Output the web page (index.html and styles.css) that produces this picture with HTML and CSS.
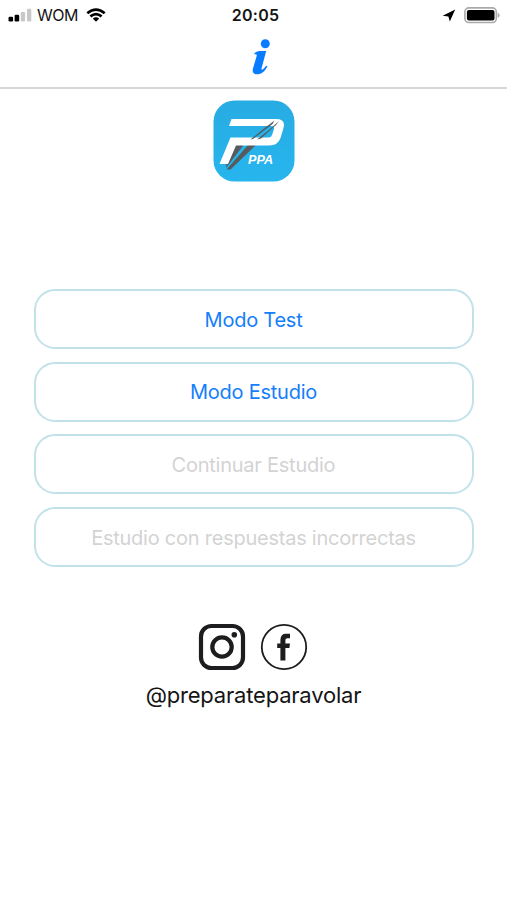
FILE: index.html
```html
<!DOCTYPE html>
<html lang="es">
<head>
<meta charset="utf-8">
<meta name="viewport" content="width=device-width, initial-scale=1">
<title>PPA</title>
<link rel="stylesheet" href="styles.css">
</head>
<body>
<header class="top">
  <div class="status">
    <div class="carrier">
      <svg class="signal" width="24" height="14" viewBox="0 0 24 14">
        <rect x="0.5" y="8.7" width="4.6" height="4.8" rx="1.2"/>
        <rect x="6.6" y="6.8" width="4.6" height="6.7" rx="1.2"/>
        <rect class="dim" x="12.8" y="4" width="4.3" height="9.5" rx="1.2"/>
        <rect class="dim" x="19" y="0.8" width="4.3" height="12.7" rx="1.2"/>
      </svg>
      <span class="name">WOM</span>
      <svg class="wifi" width="20" height="14" viewBox="0 0 20 14">
        <path class="arc" d="M1.3 5.2Q10 -2 18.7 5.2M4.4 8.4Q10 3.8 15.6 8.4"/>
        <path d="M6.8 10.6Q10 8 13.2 10.6L10 13.8Z"/>
      </svg>
    </div>
    <time class="clock">20:05</time>
    <div class="power">
      <svg width="14" height="13" viewBox="0 0 14 13"><path d="M13.2 .4L7.8 12.6L6.4 7.4L.7 6.7Z"/></svg>
      <svg class="battery" width="36" height="17" viewBox="0 0 36 17">
        <rect class="shell" x="0.9" y="0.9" width="31.4" height="14.6" rx="4"/>
        <rect x="2.9" y="3" width="27.6" height="10.5" rx="2"/>
        <path class="cap" d="M33.7 5.7Q35.6 6.2 35.6 8.2T33.7 10.7Z"/>
      </svg>
    </div>
  </div>
  <nav class="nav">
    <svg width="20" height="36" viewBox="0 0 20 36" aria-label="Información">
      <circle cx="13.3" cy="4.8" r="4.5"/>
      <path d="M2.2 14.6C4.2 12.5 6.5 12 9 12H14.2L9.7 28.8C9.1 31 10 31.3 11.3 30.1C12.4 29.2 13.2 28.1 14.1 26.8L15.4 27.5C12.8 32.6 9.3 35.3 5.2 35.3C1.4 35.3 0 33 .9 29.7L4.6 17.2C5.1 15.4 4.4 14.8 2.2 15.6Z"/>
    </svg>
  </nav>
</header>
<main class="main">
  <svg class="logo" width="82" height="82" viewBox="0 0 82 82">
    <defs><linearGradient id="sky" x2="0" y2="1"><stop stop-color="#27ace2"/><stop offset="1" stop-color="#27b5ee"/></linearGradient></defs>
    <rect x=".5" y=".5" width="81" height="81" rx="21" fill="url(#sky)"/>
    <path class="runway" d="M20 45L33 42L13 68L14 58ZM35 45H43L17.5 69.5H13.5Z"/>
    <path class="letter" d="M18.5 19H63Q73 19 70.5 28L67.5 38Q65 45.5 56 45.5H23L15 64H6.5L17.5 37.5H55.5Q58 37.5 59 35L61 29Q61.7 26 58.5 26H16Z"/>
    <path class="runway" d="M61.5 20.5L51 28.5L37.5 39.5L40 39L59.5 24ZM66 21L56 30L44 39.5L48 38.5L63 25Z"/>
    <text x="35" y="64" textLength="25" lengthAdjust="spacingAndGlyphs">PPA</text>
  </svg>
  <div class="menu">
    <button class="item">Modo Test</button>
    <button class="item study">Modo Estudio</button>
    <button class="item resume" disabled>Continuar Estudio</button>
    <button class="item wrong" disabled>Estudio con respuestas incorrectas</button>
  </div>
  <div class="social">
    <svg width="48" height="48" viewBox="0 0 48 48" aria-label="Instagram">
      <rect class="frame" x="3" y="3" width="42" height="42" rx="10.5"/>
      <circle class="frame" cx="24" cy="24" r="9.7"/>
      <circle cx="36.3" cy="11.8" r="2.8"/>
    </svg>
    <svg width="48" height="48" viewBox="0 0 48 48" aria-label="Facebook">
      <circle class="ring" cx="24" cy="24" r="22.2"/>
      <path d="M20.4 37.5V25H17.2V20.4H20.4V18C20.4 12.6 22.6 10.8 26.5 10.8H30V15.3H27.7C25.7 15.3 25.4 16.3 25.4 18V20.4H30L29.4 25H25.4V37.5Z"/>
    </svg>
  </div>
  <p class="handle">@preparateparavolar</p>
</main>
</body>
</html>
```
FILE: styles.css
```css
* { box-sizing: border-box; }
body {
  margin: 0;
  min-height: 900px;
  background: #fff;
  color: #151515;
  font-family: Inter, "Liberation Sans", sans-serif;
}
svg { display: block; flex: none; }
.top { height: 89px; border-bottom: 2px solid #d6d6d6; }
.status {
  display: grid;
  grid-template-columns: 1fr auto 1fr;
  align-items: center;
  height: 30px;
  padding: 0 7px 0 8px;
}
.carrier { display: flex; align-items: center; }
.name { margin-left: 5px; font-size: 16px; line-height: 20px; letter-spacing: -0.5px; }
.wifi { margin-left: 8px; }
.signal .dim { fill: #c8c8c8; }
.wifi .arc { fill: none; stroke: #000; stroke-width: 2.7; }
.clock { margin-left: 3px; font-size: 16px; font-weight: 600; line-height: 20px; letter-spacing: 0.3px; }
.power { display: flex; align-items: center; justify-content: flex-end; gap: 8px; }
.battery .shell { fill: none; stroke: #aaa; stroke-width: 1.6; }
.battery .cap { fill: #aaa; }
.nav { display: flex; justify-content: center; padding: 9px 0 0 16px; fill: #087cff; }
.main { display: flex; flex-direction: column; align-items: center; }
.logo { margin-top: 11px; }
.logo .letter { fill: #fff; }
.logo .runway { fill: #565b60; }
.logo text { fill: #fff; font: italic 700 12px "Liberation Sans", sans-serif; }
.menu { display: flex; flex-direction: column; gap: 12.7px; width: 440px; margin-top: 107px; }
.item {
  height: 60px;
  padding: 1px 0 0;
  border: 2px solid #c2e2ea;
  border-radius: 21px;
  background: #fff;
  color: #147efb;
  font: 400 20px/24px Inter, "Liberation Sans", sans-serif;
  letter-spacing: -0.24px;
}
.item:disabled { color: #d3d3d3; }
.social { display: flex; gap: 14px; margin: 56px 2px 0 0; fill: #1d1d1f; }
.social .frame { fill: none; stroke: #1d1d1f; stroke-width: 4.2; }
.social .ring { fill: none; stroke: #1d1d1f; stroke-width: 1.8; }
.handle { margin: 10px 0 0; font-size: 22px; line-height: 28px; letter-spacing: -0.2px; }
```
